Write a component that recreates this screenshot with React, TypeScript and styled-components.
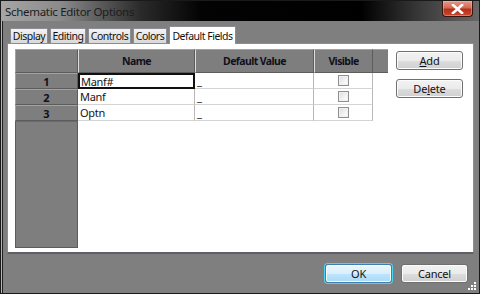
import styled, { createGlobalStyle } from 'styled-components';

const GlobalStyle = createGlobalStyle`
  html, body { margin: 0; padding: 0; background: #808080; }
  body { font-family: 'Noto Sans', 'DejaVu Sans', sans-serif; font-size: 11px; }
`;

const columns = [
  { key: 'name', title: 'Name', width: 117 },
  { key: 'value', title: 'Default Value', width: 119 },
  { key: 'visible', title: 'Visible', width: 59 },
];

const rows = [
  { id: 1, name: 'Manf#', value: '_', visible: false },
  { id: 2, name: 'Manf', value: '_', visible: false },
  { id: 3, name: 'Optn', value: '_', visible: false },
];

const tabs = [
  { label: 'Display', width: 38 },
  { label: 'Editing', width: 36 },
  { label: 'Controls', width: 43 },
  { label: 'Colors', width: 34 },
  { label: 'Default Fields', width: 67 },
];

const App = () => {
  return (
    <>
      <GlobalStyle />
      <Window>
        <TitleBar>
          <Title>Schematic Editor Options</Title>
          <CloseButton aria-label="Close">
            <svg width="13" height="10" viewBox="0 0 13 10">
              <path d="M2 1 L11 9 M11 1 L2 9" stroke="#fff" strokeWidth="2.6" strokeLinecap="square" />
            </svg>
          </CloseButton>
        </TitleBar>
        <Body>
          <TabStrip>
            {tabs.map((t) => (
              <Tab key={t.label} $width={t.width} $active={t.label === 'Default Fields'}>
                {t.label}
              </Tab>
            ))}
          </TabStrip>
          <Panel>
            <Grid>
              <HeaderRow>
                <Corner />
                {columns.map((c) => (
                  <HeaderCell key={c.key} $width={c.width}>
                    {c.title}
                  </HeaderCell>
                ))}
                <HeaderFiller />
              </HeaderRow>
              {rows.map((r, i) => (
                <Row key={r.id}>
                  <RowHeader>{r.id}</RowHeader>
                  <Cell $width={117} $selected={i === 0}>
                    {r.name}
                  </Cell>
                  <Cell $width={119}>{r.value}</Cell>
                  <Cell $width={59} $center>
                    <CheckBox />
                  </Cell>
                </Row>
              ))}
              <FillRow>
                <RowHeaderFill />
              </FillRow>
            </Grid>
            <SideButtons>
              <Button>
                <u>A</u>dd
              </Button>
              <Button>
                De<u>l</u>ete
              </Button>
            </SideButtons>
          </Panel>
          <Footer>
            <Button $default>OK</Button>
            <Button>Cancel</Button>
          </Footer>
          <Grip>
            <svg width="8" height="8" viewBox="0 0 8 8">
              <rect x="6" y="0" width="2" height="2" fill="#fff" />
              <rect x="3" y="3" width="2" height="2" fill="#fff" />
              <rect x="6" y="3" width="2" height="2" fill="#fff" />
              <rect x="0" y="6" width="2" height="2" fill="#fff" />
              <rect x="3" y="6" width="2" height="2" fill="#fff" />
              <rect x="6" y="6" width="2" height="2" fill="#fff" />
            </svg>
          </Grip>
        </Body>
      </Window>
    </>
  );
};

const Window = styled.div`
  width: 480px;
  height: 294px;
  box-sizing: border-box;
  display: flex;
  flex-direction: column;
  background: #7f7f7f;
  border: 1px solid #1a1a1a;
  box-shadow: inset 1px 0 0 #b5b5b5, inset 2px 0 0 #202020;
  overflow: hidden;
`;

const TitleBar = styled.div`
  height: 20px;
  flex: none;
  display: flex;
  align-items: flex-start;
  justify-content: space-between;
  padding-left: 4px;
  background: linear-gradient(
    90deg,
    #a6a6a6 0px,
    #8a8a8a 60px,
    #2a2a2a 140px,
    #030303 200px,
    #000 360px,
    #3a3a3a 420px,
    #6a6a6a 480px
  );
`;

const Title = styled.span`
  margin-top: 3px;
  color: #1c1c1c;
  font-size: 11.5px;
  letter-spacing: -0.3px;
  white-space: nowrap;
`;

const CloseButton = styled.div`
  width: 31px;
  height: 16px;
  margin-right: 6px;
  display: flex;
  align-items: center;
  justify-content: center;
  box-sizing: border-box;
  border: 1px solid #3a1410;
  border-top: none;
  border-radius: 0 0 4px 4px;
  background: linear-gradient(180deg, #e59a8a 0%, #d26a55 45%, #b5301c 55%, #c9482e 100%);
  box-shadow: inset 0 0 0 1px rgba(255, 200, 190, 0.4);
`;

const Body = styled.div`
  flex: 1;
  position: relative;
  display: flex;
  flex-direction: column;
  padding: 4px 5px 0 6px;
`;

const TabStrip = styled.div`
  display: flex;
  align-items: flex-end;
  gap: 2px;
  height: 18px;
  padding-left: 3px;
`;

const Tab = styled.div<{ $active?: boolean; $width: number }>`
  width: ${(p) => p.$width}px;
  height: ${(p) => (p.$active ? '18px' : '15px')};
  box-sizing: border-box;
  display: flex;
  align-items: center;
  justify-content: center;
  color: #111;
  font-size: 10.5px;
  white-space: nowrap;
  letter-spacing: -0.5px;
  border: 1px solid #8a8d94;
  border-bottom: none;
  margin-bottom: ${(p) => (p.$active ? '-1px' : '0')};
  background: ${(p) => (p.$active ? '#fff' : 'linear-gradient(180deg, #f3f3f3 0%, #e6e6e6 50%, #d9d9d9 100%)')};
  position: relative;
  z-index: ${(p) => (p.$active ? 2 : 1)};
`;

const Panel = styled.div`
  height: 211px;
  box-sizing: border-box;
  background: #fff;
  border: 1px solid #8a8d94;
  border-bottom: 2px solid #5f5f66;
  display: flex;
  padding: 5px 0 0 7px;
  gap: 8px;
`;

const Grid = styled.div`
  display: flex;
  flex-direction: column;
  height: 199px;
`;

const HeaderRow = styled.div`
  display: flex;
  height: 24px;
`;

const headerBase = `
  box-sizing: border-box;
  background: #7e7e7e;
  border: 1px solid #5c5c5c;
  border-left-color: #a2a2a2;
  border-top-color: #a2a2a2;
`;

const Corner = styled.div`
  ${headerBase}
  width: 63px;
`;

const HeaderCell = styled.div<{ $width: number }>`
  ${headerBase}
  width: ${(p) => p.$width}px;
  display: flex;
  align-items: center;
  justify-content: center;
  font-weight: bold;
  font-size: 10.5px;
  color: #10101c;
  letter-spacing: -0.6px;
  border-left-color: #dcdcdc;
`;

const HeaderFiller = styled.div`
  width: 15px;
  box-sizing: border-box;
  background: #7e7e7e;
  border-top: 1px solid #a2a2a2;
  border-bottom: 1px solid #5c5c5c;
`;

const Row = styled.div`
  display: flex;
  height: 16px;
`;

const RowHeader = styled.div`
  ${headerBase}
  width: 63px;
  display: flex;
  align-items: center;
  justify-content: center;
  font-weight: bold;
  color: #10101c;
`;

const Cell = styled.div<{ $width: number; $selected?: boolean; $center?: boolean }>`
  width: ${(p) => p.$width}px;
  box-sizing: border-box;
  display: flex;
  align-items: center;
  justify-content: ${(p) => (p.$center ? 'center' : 'flex-start')};
  padding-left: ${(p) => (p.$center ? 0 : 2)}px;
  color: #141414;
  letter-spacing: -0.3px;
  border-right: 1px solid #b8b8b8;
  border-bottom: 1px solid #d4d4d4;
  ${(p) => (p.$selected ? 'border: 2px solid #101010; padding-left: 1px;' : '')}
`;

const CheckBox = styled.div`
  width: 11px;
  height: 11px;
  box-sizing: border-box;
  border: 1px solid #8e8f8f;
  background: linear-gradient(135deg, #dcdcdc 0%, #f4f4f4 60%, #fff 100%);
  box-shadow: inset 0 0 0 1px #f0f0f0;
`;

const FillRow = styled.div`
  flex: 1;
  display: flex;
`;

const RowHeaderFill = styled.div`
  width: 63px;
  box-sizing: border-box;
  background: #7e7e7e;
  border: 1px solid #5c5c5c;
  border-top: 1px solid #6a6a6a;
`;

const SideButtons = styled.div`
  display: flex;
  flex-direction: column;
  gap: 9px;
  padding-top: 2px;
`;

const Button = styled.div<{ $default?: boolean }>`
  width: 67px;
  height: 19px;
  box-sizing: border-box;
  display: flex;
  align-items: center;
  justify-content: center;
  color: #111;
  letter-spacing: -0.2px;
  border-radius: 3px;
  border: 1px solid ${(p) => (p.$default ? '#3c7fb1' : '#707070')};
  background: ${(p) =>
    p.$default
      ? 'linear-gradient(180deg, #eaf6fd 0%, #d9f0fc 50%, #bee6fd 51%, #a7d9f5 100%)'
      : 'linear-gradient(180deg, #f2f2f2 0%, #ebebeb 50%, #dddddd 51%, #cfcfcf 100%)'};
  box-shadow: ${(p) => (p.$default ? '0 0 0 1px #48d6f6, inset 0 0 0 1px #fff' : 'inset 0 0 0 1px #fcfcfc')};
  u {
    text-decoration: underline;
  }
`;

const Footer = styled.div`
  display: flex;
  justify-content: flex-end;
  gap: 9px;
  padding: 10px 6px 0 0;
`;

const Grip = styled.div`
  position: absolute;
  right: 3px;
  bottom: 3px;
  width: 8px;
  height: 8px;
  display: flex;
`;

export default App;
